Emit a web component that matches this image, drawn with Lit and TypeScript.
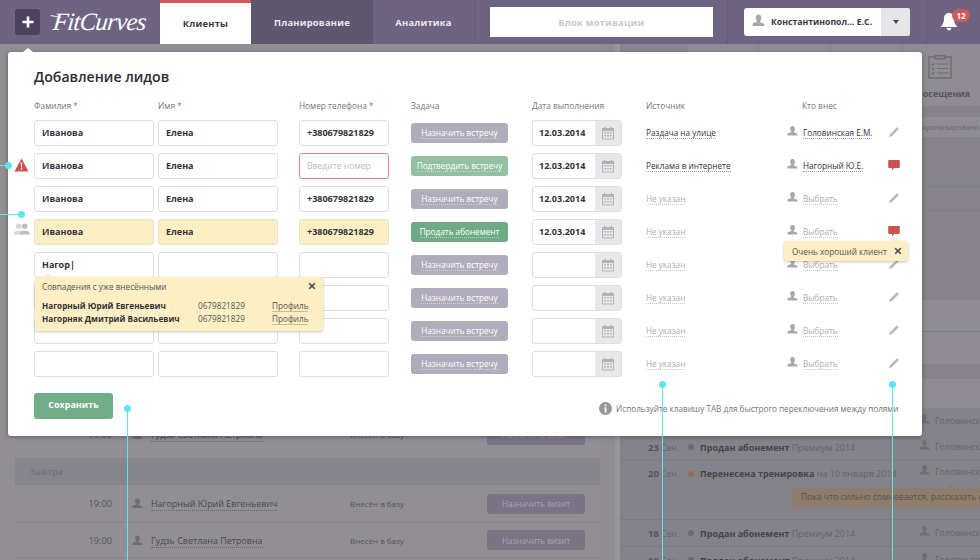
import { LitElement, html, css, nothing } from "lit";
import { customElement } from "lit/decorators.js";

const person = (cls = "ic-person") => html`<svg class=${cls} viewBox="0 0 12 12"><path d="M6 0.5c-1.700 0-2.600 1.200-2.600 2.900 0 1.200.5 2.200 1.200 2.800v.9c-1.600.6-3.800 1-4.100 2.300v1.600h11V10c-.3-1.300-2.500-1.700-4.100-2.300v-.9c.7-.6 1.200-1.600 1.200-2.800C8.600 1.700 7.700.5 6 .5z"/></svg>`;
const pencil = () => html`<svg class="ic-act" viewBox="0 0 12 12"><path fill="#b8b6bc" d="M9 1.200l1.900 1.900-7.200 7.200-2.700.8.800-2.700z"/></svg>`;
const bubble = () => html`<svg class="ic-act" viewBox="0 0 12 12"><path fill="#c9544f" d="M1 1h10a.8.8 0 0 1 .8.8v6.400a.8.8 0 0 1-.8.8H6.300L4 11.200V9H1a.8.8 0 0 1-.8-.8V1.800A.8.8 0 0 1 1 1z"/></svg>`;
const calendar = () => html`<svg class="ic-cal" viewBox="0 0 14 14"><path fill="#b4b2b9" d="M1 2h2V.8h1.500V2h5V.8H11V2h2v11.500H1zM2 5v7.500h10V5z"/><g fill="#b4b2b9"><rect x="3.200" y="6" width="1.800" height="1.500"/><rect x="6.100" y="6" width="1.800" height="1.500"/><rect x="9" y="6" width="1.800" height="1.500"/><rect x="3.200" y="9" width="1.800" height="1.500"/><rect x="6.100" y="9" width="1.800" height="1.500"/><rect x="9" y="9" width="1.800" height="1.500"/></g></svg>`;
const closeX = (cls: string) => html`<svg class=${cls} viewBox="0 0 10 10"><path d="M1.500 1.500l7 7M8.500 1.500l-7 7" stroke="#4a4652" stroke-width="2" fill="none"/></svg>`;

type Row = {
  last: string; first: string; phone: string; phoneErr?: boolean; hl?: boolean;
  task: string; kind: "gray" | "light" | "green"; date: string;
  src: string; who: string; comment?: boolean; mark?: "warn" | "people";
};

const rows: Row[] = [
  { last: "Иванова", first: "Елена", phone: "+380679821829", task: "Назначить встречу", kind: "gray", date: "12.03.2014", src: "Раздача на улице", who: "Головинская Е.М." },
  { last: "Иванова", first: "Елена", phone: "Введите номер", phoneErr: true, task: "Подтвердить встречу", kind: "light", date: "12.03.2014", src: "Реклама в интернете", who: "Нагорный Ю.Е.", comment: true, mark: "warn" },
  { last: "Иванова", first: "Елена", phone: "+380679821829", task: "Назначить встречу", kind: "gray", date: "12.03.2014", src: "", who: "" },
  { last: "Иванова", first: "Елена", phone: "+380679821829", hl: true, task: "Продать абонемент", kind: "green", date: "12.03.2014", src: "", who: "", comment: true, mark: "people" },
  { last: "Нагор|", first: "", phone: "", task: "Назначить встречу", kind: "gray", date: "", src: "", who: "" },
  { last: "", first: "", phone: "", task: "Назначить встречу", kind: "gray", date: "", src: "", who: "" },
  { last: "", first: "", phone: "", task: "Назначить встречу", kind: "gray", date: "", src: "", who: "" },
  { last: "", first: "", phone: "", task: "Назначить встречу", kind: "gray", date: "", src: "", who: "" },
];

const timeline = [
  { cls: "tl-a", d: "", m: "", t: "", r: "", dot: "" },
  { cls: "tl-b", d: "23", m: "Сен.", t: "Продан абонемент", r: "Премиум 2014", dot: "" },
  { cls: "tl-c", d: "20", m: "Сен.", t: "Перенесена тренировка", r: "на 10 января 2014", dot: "orange", note: "Пока что сильно сомневается, рассказать о преимуществах" },
  { cls: "tl-b", d: "18", m: "Сен.", t: "Продан абонемент", r: "Премиум 2014", dot: "" },
  { cls: "tl-b", d: "18", m: "Сен.", t: "Продан абонемент", r: "Премиум 2014", dot: "" },
];

@customElement("app-root")
export class AppRoot extends LitElement {
  static styles = css`
    :host { display: block; width: 980px; height: 560px; position: relative; overflow: hidden; font-family: "Open Sans", "Noto Sans", sans-serif; background: #8f8d93; color: #33313a; }
    svg { display: block; flex: none; }

    .top { height: 44px; background: #6e6382; display: flex; align-items: stretch; }
    .plus { width: 25px; height: 26px; margin: 9px 0 0 15px; background: #4c4160; border-radius: 3px; display: flex; align-items: center; justify-content: center; }
    .plus svg { width: 12px; height: 12px; }
    .logo { width: 108px; margin-left: 12px; box-sizing: border-box; padding-left: 1px; position: relative; display: flex; align-items: center; font-family: "Liberation Serif", serif; font-style: italic; font-size: 25px; letter-spacing: -0.8px; color: #fff; white-space: nowrap; transform: skewX(-6deg); }
    .logo::before { content: ""; position: absolute; left: -2px; top: 16px; width: 11px; height: 1px; background: #e8e5ee; transform: rotate(10deg); }
    .tab { display: flex; align-items: center; justify-content: center; font-size: 9.400px; font-weight: 700; color: #eceaf0; letter-spacing: .2px; }
    .tab.on { width: 91px; background: #fff; border-top: 3px solid #d0595a; box-sizing: border-box; color: #3a3741; padding-bottom: 1px; }
    .tab.dark { width: 122px; background: #5f566f; }
    .tab.plain { width: 101px; border-right: 1px solid #645a77; }
    .motiv { width: 223px; height: 30px; margin: 7px 0 0 15px; background: #fff; display: flex; align-items: center; justify-content: center; font-size: 9.400px; font-weight: 700; color: #c8c8cb; letter-spacing: .2px; }
    .sep { width: 1px; background: #645a77; }
    .sep.a { margin-left: 14px; }
    .user { width: 166px; height: 28px; margin: 8px 0 0 16px; background: #fff; border-radius: 3px; display: flex; align-items: center; overflow: hidden; }
    .user .ic-person { width: 13px; height: 13px; margin: -3px 0 0 8px; fill: #a9a7ae; }
    .uname { flex: 1; font-size: 8.700px; font-weight: 700; color: #3a3741; padding-left: 6px; white-space: nowrap; }
    .drop { width: 29px; height: 100%; background: #e6e6e8; display: flex; align-items: center; justify-content: center; }
    .drop i { border: 3.500px solid transparent; border-top: 4px solid #4a4652; border-bottom: 0; }
    .sep.b { margin-left: 16px; }
    .bellbox { width: 46px; position: relative; }
    .bell { width: 18px; height: 19px; position: absolute; left: 13px; top: 12px; }
    .badge { position: absolute; left: 25px; top: 9px; width: 18px; height: 13px; border-radius: 7px; background: #d0595a; color: #fff; font-size: 8px; font-weight: 700; text-align: center; line-height: 13px; }

    .bg { display: flex; height: 516px; }
    .left { width: 600px; box-sizing: border-box; padding: 373px 0 0 15px; display: flex; flex-direction: column; background: #918f94; }
    .lrow { height: 34px; flex: none; display: flex; align-items: center; border-bottom: 1px solid #87858b; font-size: 9.200px; color: #55535b; }
    .lrow.first { height: 35px; border: 0; margin-bottom: 6px; }
    .lrow.tall { height: 37px; }
    .band { height: 27px; flex: none; background: #87858c; padding-left: 15px; display: flex; align-items: center; font-size: 9px; font-weight: 700; color: #75737a; }
    .time { width: 97px; text-align: right; }
    .lrow .ic-person { width: 11px; height: 11px; margin-left: 20px; fill: #706e75; }
    .lname { width: 199px; margin-left: 8px; font-size: 8.950px; color: #4a4852; white-space: nowrap; }
    .lname span { border-bottom: 1px dotted #66646b; }
    .status { width: 137px; font-size: 8px; }
    .lbtn { width: 98px; height: 20px; border-radius: 3px; background: #7b7485; color: #a7a3ad; font-size: 8.200px; display: flex; align-items: center; justify-content: center; }
    .gutter { width: 15px; background: #8f8d92; }
    .gutter2 { width: 5px; background: #98969a; }
    .right { flex: 1; min-width: 0; display: flex; flex-direction: column; overflow: hidden; }
    .right > div { flex: none; }
    .rtop { height: 62px; display: flex; background: #8f8d93; }
    .rtab { width: 66px; flex: none; background: #88868c; border-right: 1px solid #86848a; }
    .rtab.l { background: #8f8d93; width: 71px; }
    .rvisit { flex: 1; min-width: 0; display: flex; flex-direction: column; align-items: flex-start; padding: 11px 0 0 24px; }
    .rvisit svg { width: 26px; height: 24px; }
    .rvisit b { font-size: 9px; font-weight: 700; color: #58565d; margin: 8px 0 0 -11px; white-space: nowrap; }
    .sd { background: #86848a; }
    .sl { background: #8f8d93; }
    .s1 { height: 11px; }
    .s2 { height: 20px; font-size: 7.400px; color: #6b696f; line-height: 20px; text-align: right; white-space: nowrap; padding-right: 1px; }
    .s3 { height: 49px; border-bottom: 1px solid #7f7d84; }
    .s4 { height: 23px; border-bottom: 1px solid #7f7d84; }
    .s5 { height: 89px; }
    .s6 { height: 31px; border-bottom: 1px solid #7f7d84; }
    .s7 { height: 32px; }
    .s8 { height: 15px; }
    .s9 { height: 29px; }
    .tl-a, .tl-b, .tl-c { background: #85838a; display: flex; box-sizing: border-box; border-bottom: 1px solid #7d7b82; padding-left: 28px; font-size: 9px; color: #66646b; position: relative; white-space: nowrap; }
    .tl-a { height: 26px; border: 0; align-items: center; }
    .tl-b { height: 27px; align-items: center; }
    .tl-c { height: 59px; padding-top: 6px; flex-wrap: wrap; align-content: flex-start; }
    .tl-day { width: 40px; font-size: 8.500px; }
    .tl-day b { font-weight: 700; color: #55535a; font-size: 9.500px; }
    .tl-dot { width: 6px; height: 6px; border-radius: 50%; background: #6d6b72; margin-right: 6px; align-self: center; }
    .tl-dot.orange { background: #8f6f55; }
    .tl-c .tl-dot { align-self: flex-start; margin-top: 4px; }
    .tl-title b { font-weight: 700; color: #45434a; }
    .tl-who { position: absolute; left: 299px; display: flex; align-items: center; gap: 5px; font-size: 8.800px; }
    .tl-a .tl-who, .tl-b .tl-who { top: 50%; transform: translateY(-50%); }
    .tl-c .tl-who { top: 5px; }
    .tl-who .ic-person { width: 11px; height: 12px; margin-top: -4px; fill: #706e75; }
    .tl-note { position: absolute; left: 172px; top: 27px; height: 20px; line-height: 19px; padding: 0 9px; border-radius: 3px; background: #8f7d6c; color: #59534d; font-size: 8.600px; }
    .tl-note::before { content: ""; position: absolute; left: 155px; top: -4px; border: 4px solid transparent; border-bottom-color: #8f7d6c; border-top: 0; }

    .modal { position: absolute; left: 8px; top: 52px; width: 914px; height: 384px; box-sizing: border-box; background: #fff; border-radius: 3px; box-shadow: 0 1px 4px rgba(40,38,46,.45); padding: 15px 0 0 26px; display: flex; flex-direction: column; }
    .modal::before { content: ""; position: absolute; left: 15px; top: -4px; border: 5px solid transparent; border-bottom: 4px solid #fff; border-top: 0; }
    h1 { margin: 0; font-size: 14.100px; line-height: 20px; font-weight: 600; color: #2c2a31; height: 20px; }
    .heads { display: flex; margin-top: 13px; height: 20px; font-size: 8.300px; color: #76737e; white-space: nowrap; }
    .heads em { font-style: normal; color: #d0595a; }
    .row { display: flex; flex: none; height: 26px; margin-bottom: 7px; align-items: stretch; position: relative; }
    .c1 { width: 120px; flex: none; }
    .c2 { width: 120px; flex: none; margin-left: 4px; }
    .c3 { width: 90px; flex: none; margin-left: 21px; }
    .c4 { width: 97px; flex: none; margin-left: 22px; }
    .c5 { width: 90px; flex: none; margin-left: 24px; }
    .c6 { width: 141px; flex: none; margin-left: 24px; }
    .c7 { width: 88px; flex: none; }
    .c8 { width: 12px; flex: none; margin-left: 13px; }
    .heads .c7 { padding-left: 15px; box-sizing: border-box; }
    .field { box-sizing: border-box; border: 1px solid #dfdfe1; border-radius: 3px; background: #fff; padding: 0 7px 1px; display: flex; align-items: center; font-size: 9px; font-weight: 700; color: #33313a; white-space: nowrap; }
    .field.hl { background: #fdefc3; border-color: #ede2bf; }
    .field.err { border-color: #dd8a8a; color: #bdbcc0; font-weight: 400; font-size: 8.600px; }
    .taskcell { display: flex; align-items: center; }
    .task { width: 100%; height: 20px; border-radius: 3px; display: flex; align-items: center; justify-content: center; font-size: 8.200px; color: #fff; white-space: nowrap; margin-top: -1px; }
    .task span { border-bottom: 1px dotted rgba(255,255,255,.45); line-height: 11px; }
    .task.gray { background: #b0acbb; }
    .task.light { background: #93bfa2; }
    .task.green { background: #6fab85; }
    .date { display: flex; box-sizing: border-box; border: 1px solid #dfdfe1; border-radius: 3px; overflow: hidden; }
    .dval { flex: 1; padding: 0 0 1px 6px; display: flex; align-items: center; font-size: 9px; font-weight: 700; color: #33313a; }
    .dbtn { width: 26px; background: #e8e8ea; display: flex; align-items: center; justify-content: center; }
    .ic-cal { width: 14px; height: 14px; }
    .src { display: flex; align-items: center; font-size: 8.200px; color: #33313a; white-space: nowrap; }
    .src span { border-bottom: 1px dotted #a3a1a8; line-height: 11px; }
    .src.mute { color: #aeacb3; }
    .src.mute span { border-bottom-color: #c6c5c9; }
    .who { display: flex; align-items: center; gap: 5px; }
    .who .ic-person { width: 11px; height: 12px; margin-top: -5px; fill: #a9a7ae; }
    .act { display: flex; align-items: center; }
    .ic-act { width: 12px; height: 12px; margin-top: -3px; }
    .mark { position: absolute; left: -20px; top: 5px; }
    .mark svg { width: 15px; height: 14px; }
    .mark.p { left: -21px; top: 4px; }
    .mark.p svg { width: 18px; height: 12px; }

    .foot { display: flex; margin-top: 9px; align-items: flex-start; }
    .save { width: 79px; flex: none; height: 26px; box-sizing: border-box; background: #71ae87; border-radius: 3px; color: #fff; font-size: 8.800px; font-weight: 700; display: flex; align-items: center; justify-content: center; padding-bottom: 2px; letter-spacing: .1px; }
    .hint { margin: 9px 0 0 486px; display: flex; align-items: center; gap: 4px; font-size: 8.200px; color: #76737e; white-space: nowrap; }
    .hint svg { width: 13px; height: 13px; }

    .pop { position: absolute; left: 27px; top: 225px; width: 288px; height: 54px; box-sizing: border-box; background: #fdefc3; border-radius: 3px; box-shadow: 0 1px 3px rgba(90,80,50,.35); padding: 3px 7px 0 7px; font-size: 8.200px; color: #55525a; }
    .pop::before { content: ""; position: absolute; left: 9px; top: -4px; border: 4px solid transparent; border-bottom-color: #fdefc3; border-top: 0; }
    .pop-h { display: flex; justify-content: space-between; align-items: center; height: 12px; }
    .px { width: 8px; height: 8px; }
    .pop-r { display: flex; height: 13px; align-items: center; white-space: nowrap; }
    .pop-r.f { margin-top: 7px; }
    .pop-r b { width: 156px; color: #33313a; font-weight: 700; }
    .pop-r i { font-style: normal; width: 74px; }
    .pop-r u { text-decoration: none; border-bottom: 1px solid #c9bd97; line-height: 11px; }
    .tip { position: absolute; left: 776px; top: 189px; width: 124px; height: 20px; box-sizing: border-box; background: #fdefc3; border-radius: 3px; box-shadow: 0 1px 3px rgba(90,80,50,.35); display: flex; align-items: center; justify-content: space-between; padding: 0 6px 0 8px; font-size: 8.200px; color: #55525a; white-space: nowrap; }
    .tip::before { content: ""; position: absolute; left: 108px; top: -4px; border: 4px solid transparent; border-bottom-color: #fdefc3; border-top: 0; }

    .pin { position: absolute; background: #5fe6ea; }
    .dot { position: absolute; width: 7px; height: 7px; border-radius: 50%; background: #5fe6ea; }
    .l1 { left: 0; top: 165px; width: 8px; height: 1px; } .d1 { left: 5px; top: 162px; }
    .l2 { left: 0; top: 214px; width: 21px; height: 1px; } .d2 { left: 18px; top: 211px; }
    .l3 { left: 127px; top: 408px; width: 1px; height: 152px; } .d3 { left: 124px; top: 405px; }
    .l4 { left: 662px; top: 384px; width: 1px; height: 176px; } .d4 { left: 659px; top: 381px; }
    .l5 { left: 892px; top: 384px; width: 1px; height: 176px; } .d5 { left: 889px; top: 381px; }
  `;

  private renderRow(r: Row) {
    const mute = !r.src;
    return html`<div class="row">
      ${r.mark === "warn" ? html`<div class="mark"><svg viewBox="0 0 15 14"><path fill="#c9504c" d="M7.500.5l7 13H.5z"/><path fill="#fff" d="M6.800 4.500h1.400l-.2 5H7zM6.800 10.300h1.400v1.500H6.800z"/></svg></div>` : nothing}
      ${r.mark === "people" ? html`<div class="mark p"><svg viewBox="0 0 18 13"><g fill="#d5d4d8"><circle cx="5.500" cy="3.500" r="3"/><path d="M0 12.500c0-3 2-4 5.500-4s5.500 1 5.500 4z"/></g><g fill="#bdbcc2"><circle cx="12" cy="3.500" r="3"/><path d="M6.500 12.500c0-3 2-4 5.500-4s5.500 1 5.500 4z"/></g></svg></div>` : nothing}
      <div class="field c1 ${r.hl ? "hl" : ""}">${r.last}</div>
      <div class="field c2 ${r.hl ? "hl" : ""}">${r.first}</div>
      <div class="field c3 ${r.hl ? "hl" : ""} ${r.phoneErr ? "err" : ""}">${r.phone}</div>
      <div class="c4 taskcell"><div class="task ${r.kind}"><span>${r.task}</span></div></div>
      <div class="c5 date"><div class="dval">${r.date}</div><div class="dbtn">${calendar()}</div></div>
      <div class="c6 src ${mute ? "mute" : ""}"><span>${r.src || "Не указан"}</span></div>
      <div class="c7 who src ${mute ? "mute" : ""}">${person()}<span>${r.who || "Выбрать"}</span></div>
      <div class="c8 act">${r.comment ? bubble() : pencil()}</div>
    </div>`;
  }

  render() {
    return html`
      <div class="top">
        <div class="plus"><svg viewBox="0 0 12 12"><path d="M6 .5v11M.5 6h11" stroke="#fff" stroke-width="2.600" fill="none"/></svg></div>
        <div class="logo">FitCurves</div>
        <div class="tab on">Клиенты</div>
        <div class="tab dark">Планирование</div>
        <div class="tab plain">Аналитика</div>
        <div class="motiv">Блок мотивации</div>
        <div class="sep a"></div>
        <div class="user">${person()}<div class="uname">Константинопол... Е.С.</div><div class="drop"><i></i></div></div>
        <div class="sep b"></div>
        <div class="bellbox">
          <svg class="bell" viewBox="0 0 18 19"><path fill="#fff" d="M9 1c3.500 0 5 2.500 5 6 0 3.500 1.500 6 3.500 8H.5c2-2 3.500-4.500 3.500-8 0-3.500 1.500-6 5-6zM6.700 16h4.600c0 1.300-1 2.500-2.300 2.500S6.700 17.300 6.700 16z"/></svg>
          <div class="badge">12</div>
        </div>
      </div>

      <div class="bg">
        <div class="left">
          <div class="lrow first"><div class="time">19:00</div>${person()}<div class="lname"><span>Гудзь Светлана Петровна</span></div><div class="status">Внесён в базу</div><div class="lbtn">Назначить визит</div></div>
          <div class="band">Завтра</div>
          <div class="lrow tall"><div class="time">19:00</div>${person()}<div class="lname"><span>Нагорный Юрий Евгеньевич</span></div><div class="status">Внесён в базу</div><div class="lbtn">Назначить визит</div></div>
          <div class="lrow"><div class="time">19:00</div>${person()}<div class="lname"><span>Гудзь Светлана Петровна</span></div><div class="status">Внесён в базу</div><div class="lbtn">Назначить визит</div></div>
        </div>
        <div class="gutter"></div><div class="gutter2"></div>
        <div class="right">
          <div class="rtop">
            <div class="rtab"></div><div class="rtab l"></div><div class="rtab l"></div><div class="rtab l"></div>
            <div class="rvisit">
              <svg viewBox="0 0 26 24" fill="none" stroke="#6f6d73" stroke-width="1.500"><path d="M8 2H2v21h22V2h-6"/><rect x="8" y="0.800" width="10" height="3"/><path d="M10 9h11M10 13.500h11M10 18h11M4.500 9l1.300 1.300L7.500 7.800M4.500 13.500l1.300 1.300 1.700-2.500M4.500 18l1.300 1.300 1.700-2.500" stroke-width="1.200"/></svg>
              <b>Посещения</b>
            </div>
          </div>
          <div class="s1 sd"></div>
          <div class="s2 sl">Синхронизировано</div>
          <div class="s3 sd"></div><div class="s4 sd"></div><div class="s5 sd"></div>
          <div class="s6 sl"></div><div class="s7 sl"></div><div class="s8 sd"></div><div class="s9 sl"></div>
          ${timeline.map((t) => html`<div class=${t.cls}>
            ${t.d ? html`<div class="tl-day"><b>${t.d}</b> ${t.m}</div><div class="tl-dot ${t.dot}"></div><div class="tl-title"><b>${t.t}</b> ${t.r}</div>` : nothing}
            <div class="tl-who">${person()}Головинская Е.М.</div>
            ${t.note ? html`<div class="tl-note">${t.note}</div>` : nothing}
          </div>`)}
        </div>
      </div>

      <div class="modal">
        <h1>Добавление лидов</h1>
        <div class="heads">
          <div class="c1">Фамилия <em>*</em></div>
          <div class="c2">Имя <em>*</em></div>
          <div class="c3">Номер телефона <em>*</em></div>
          <div class="c4">Задача</div>
          <div class="c5">Дата выполнения</div>
          <div class="c6">Источник</div>
          <div class="c7">Кто внес</div>
        </div>
        ${rows.map((r) => this.renderRow(r))}
        <div class="foot">
          <div class="save">Сохранить</div>
          <div class="hint"><svg viewBox="0 0 13 13"><circle cx="6.500" cy="6.500" r="6.500" fill="#97959c"/><path fill="#fff" d="M5.600 2.500h1.800v1.700H5.600zM5.600 5.300h1.800v5.200H5.600z"/></svg>Используйте клавишу TAB для быстрого переключения между полями</div>
        </div>
        <div class="pop">
          <div class="pop-h"><span>Совпадения с уже внесёнными</span>${closeX("px")}</div>
          <div class="pop-r f"><b>Нагорный Юрий Евгеньевич</b><i>0679821829</i><u>Профиль</u></div>
          <div class="pop-r"><b>Нагорняк Дмитрий Васильевич</b><i>0679821829</i><u>Профиль</u></div>
        </div>
        <div class="tip">Очень хороший клиент${closeX("px")}</div>
      </div>

      <div class="pin l1"></div><div class="dot d1"></div>
      <div class="pin l2"></div><div class="dot d2"></div>
      <div class="pin l3"></div><div class="dot d3"></div>
      <div class="pin l4"></div><div class="dot d4"></div>
      <div class="pin l5"></div><div class="dot d5"></div>
    `;
  }
}
